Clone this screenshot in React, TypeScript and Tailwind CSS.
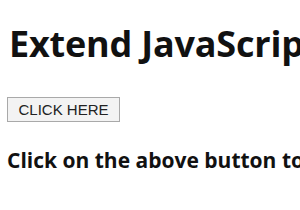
export default function App() {
  return (
    <div className="w-[300px] h-[210px] overflow-hidden bg-white text-[#111] font-['Segoe_UI','Open_Sans',sans-serif]">
      <h1 className="whitespace-nowrap pl-[9px] pt-[17px] text-[36px] font-bold leading-[54px] tracking-[-0.2px]">
        Extend JavaScript Array
      </h1>
      <div className="pl-[7px] pt-[26px]">
        <button
          type="button"
          className="h-[25px] w-[113px] border border-[#a9a9a9] bg-[#f3f3f3] font-['Liberation_Sans',sans-serif] text-[15px] leading-none text-[#222]"
        >
          CLICK HERE
        </button>
      </div>
      <p className="whitespace-nowrap pl-[7px] pt-[23px] text-[21px] font-bold leading-[30px]">
        Click on the above button to extend the array
      </p>
    </div>
  );
}
